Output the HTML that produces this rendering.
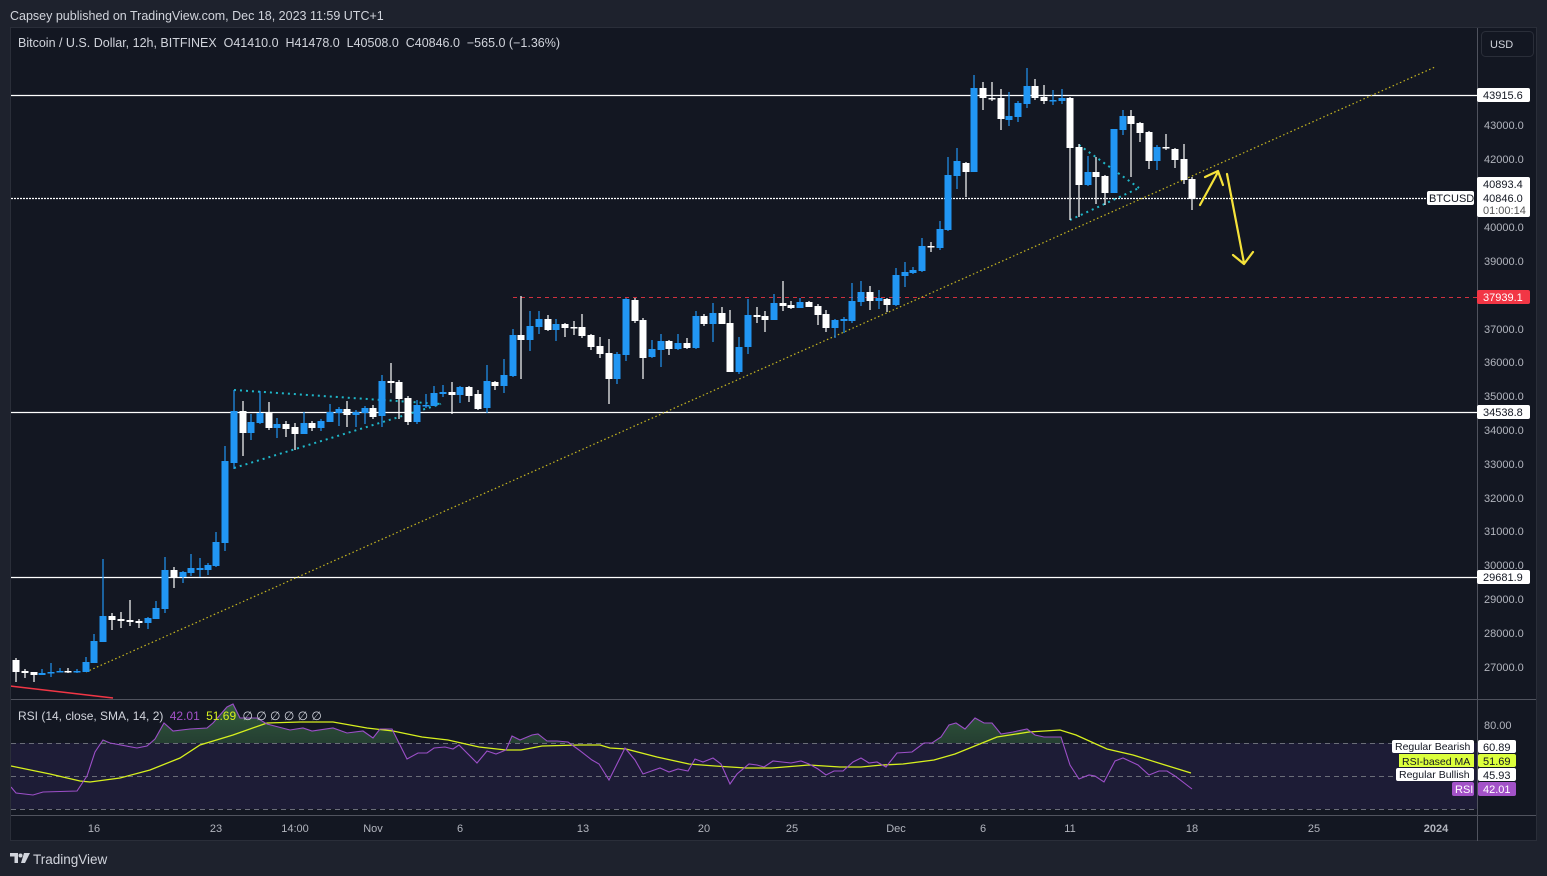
<!DOCTYPE html>
<html><head><meta charset="utf-8">
<style>
html,body{margin:0;padding:0;background:#1e222d;width:1547px;height:876px;overflow:hidden;font-family:"Liberation Sans",sans-serif}
svg{position:absolute;left:0;top:0}
</style></head><body>
<svg id="s" width="1547" height="876" xmlns="http://www.w3.org/2000/svg" font-family="Liberation Sans, sans-serif">
<defs>
<clipPath id="chartclip"><rect x="11" y="28" width="1466" height="671"/></clipPath>
<clipPath id="rsiclip"><rect x="11" y="700" width="1466" height="115"/></clipPath>
<clipPath id="above"><rect x="11" y="700" width="1466" height="43"/></clipPath>
<linearGradient id="gg" x1="0" y1="0" x2="0" y2="1"><stop offset="0" stop-color="#3f7a4a" stop-opacity="0.7"/><stop offset="1" stop-color="#2a4a35" stop-opacity="0.25"/></linearGradient>
</defs>
<text x="10" y="20" fill="#d1d4dc" font-size="12.5">Capsey published on TradingView.com, Dec 18, 2023 11:59 UTC+1</text>
<rect x="10.5" y="27.5" width="1526" height="813" fill="#131722" stroke="#2a2e39"/>
<line x1="1477.5" y1="28" x2="1477.5" y2="841" stroke="#50535e"/>
<line x1="11" y1="699.5" x2="1536" y2="699.5" stroke="#50535e"/>
<line x1="11" y1="815.5" x2="1536" y2="815.5" stroke="#50535e"/>
<rect x="11" y="743" width="1466" height="66" fill="#1f1d38" opacity="0.9"/>
<g stroke="#6a6d78" stroke-dasharray="5,4" stroke-width="1">
<line x1="11" y1="743.5" x2="1477" y2="743.5"/><line x1="11" y1="776.5" x2="1477" y2="776.5"/><line x1="11" y1="809.5" x2="1477" y2="809.5"/>
</g>
<g id="main" clip-path="url(#chartclip)">
<line x1="10" y1="686" x2="113" y2="698" stroke="#f23645" stroke-width="1.5"/>
<line x1="11" y1="95.5" x2="1477" y2="95.5" stroke="#fff" stroke-width="1.3"/>
<line x1="11" y1="412.5" x2="1477" y2="412.5" stroke="#fff" stroke-width="1.3"/>
<line x1="11" y1="577.5" x2="1477" y2="577.5" stroke="#fff" stroke-width="1.3"/>
<line x1="11" y1="198.5" x2="1427" y2="198.5" stroke="#fff" stroke-width="1.3" stroke-dasharray="2,1"/>
<line x1="513" y1="297.5" x2="1477" y2="297.5" stroke="#f23645" stroke-dasharray="4,4" opacity="0.85"/>
<line x1="86" y1="672" x2="1435" y2="67" stroke="#c8b820" stroke-width="1.2" stroke-dasharray="1.5,2.5"/>
<g stroke="#1fb6c8" stroke-width="2" stroke-dasharray="2,4" fill="none">
<line x1="234" y1="390" x2="441" y2="404"/><line x1="234" y1="468" x2="441" y2="404"/>
<line x1="1079" y1="145" x2="1139" y2="188"/><line x1="1070" y1="220" x2="1139" y2="188"/>
</g>
<g id="candles"></g>
<g stroke="#f5e23a" stroke-width="2.2" fill="none" stroke-linecap="round" stroke-linejoin="round">
<path d="M1200 205 L1218 172 M1205 177 L1218 171 L1223 185"/>
<path d="M1227 174 L1244 263 M1233 255 L1244 264 L1253 252"/>
</g>
</g>
<g clip-path="url(#rsiclip)">
<g clip-path="url(#above)"><path id="rsifill" fill="url(#gg)"/></g>
<path id="ma" fill="none" stroke="#d7f01e" stroke-width="1.3"/>
<path id="rsi" fill="none" stroke="#9c4fc8" stroke-width="1.1"/>
</g>
<text x="18" y="720" font-size="12" fill="#d1d4dc">RSI (14, close, SMA, 14, 2) <tspan fill="#a352c8" dx="3">42.01</tspan> <tspan fill="#d7f01e" dx="3">51.69</tspan> <tspan fill="#d1d4dc" dx="3">∅ ∅ ∅ ∅ ∅ ∅</tspan></text>
<text x="18" y="47" font-size="12.5" fill="#d1d4dc" xml:space="preserve">Bitcoin / U.S. Dollar, 12h, BITFINEX  O41410.0  H41478.0  L40508.0  C40846.0  −565.0 (−1.36%)</text>
<rect x="1481.5" y="31.5" width="52" height="25" rx="4" fill="#131722" stroke="#2a2e39"/>
<text x="1490" y="48" font-size="11" fill="#d1d4dc">USD</text>
<g id="axis" font-size="11" fill="#b2b5be"></g>
<g font-size="11">
<rect x="1477" y="88" width="53" height="14" rx="2" fill="#fff"/><text x="1483" y="99" fill="#131722">43915.6</text>
<rect x="1477" y="177" width="53" height="40" rx="2" fill="#fff"/>
<text x="1483" y="188" fill="#131722">40893.4</text><text x="1483" y="202" fill="#131722">40846.0</text><text x="1483" y="214" fill="#555">01:00:14</text>
<rect x="1427" y="191" width="47" height="14" rx="2" fill="#fff"/><text x="1429" y="202" fill="#131722">BTCUSD</text>
<rect x="1477" y="290" width="53" height="14" rx="2" fill="#f23645"/><text x="1483" y="301" fill="#fff">37939.1</text>
<rect x="1477" y="405" width="53" height="14" rx="2" fill="#fff"/><text x="1483" y="416" fill="#131722">34538.8</text>
<rect x="1477" y="570" width="53" height="14" rx="2" fill="#fff"/><text x="1483" y="581" fill="#131722">29681.9</text>
<text x="1484" y="729" fill="#b2b5be">80.00</text>
<rect x="1392" y="740" width="82" height="13" rx="2" fill="#fff"/><text x="1395" y="750" fill="#131722" font-size="10.5">Regular Bearish</text>
<rect x="1478" y="740" width="38" height="13" rx="2" fill="#fff"/><text x="1483" y="751" fill="#131722">60.89</text>
<rect x="1399" y="754" width="75" height="13" fill="#dcff3c"/><text x="1402" y="765" fill="#131722" font-size="10.5">RSI-based MA</text>
<rect x="1478" y="754" width="38" height="13" rx="2" fill="#dcff3c"/><text x="1483" y="765" fill="#131722">51.69</text>
<rect x="1396" y="768" width="78" height="13" rx="2" fill="#fff"/><text x="1399" y="778" fill="#131722" font-size="10.5">Regular Bullish</text>
<rect x="1478" y="768" width="38" height="13" rx="2" fill="#fff"/><text x="1483" y="779" fill="#131722">45.93</text>
<rect x="1452" y="782" width="22" height="14" rx="2" fill="#a352c8"/><text x="1455" y="793" fill="#fff">RSI</text>
<rect x="1478" y="782" width="38" height="14" rx="2" fill="#a352c8"/><text x="1483" y="793" fill="#fff">42.01</text>
</g>
<g id="time" font-size="11" fill="#b2b5be" text-anchor="middle"></g>
<g fill="#d1d4dc">
<path d="M10 853 h8 v10 h-3.5 v-6.5 h-4.5z"/><circle cx="20.5" cy="855.5" r="2"/><path d="M24 853 h6 l-5 10 h-4z"/>
</g>
<text x="33" y="864" font-size="13.5" fill="#d1d4dc">TradingView</text>
</svg>
<script>
var NS="http://www.w3.org/2000/svg";
function el(t,a,p){var e=document.createElementNS(NS,t);for(var k in a)e.setAttribute(k,a[k]);p.appendChild(e);return e;}
var C=[[16,660,672,658,682,'w'],[25,671,673,669,678,'w'],[34,672,675,672,682,'w'],[42,673,675,669,675,'b'],[51,672,673,663,677,'b'],[60,671,672,668,672,'b'],[68,671,672,668,673,'w'],[77,671,672,669,673,'b'],[86,662,672,657,672,'b'],[94,641,663,634,663,'b'],[103,616,642,559,642,'b'],[112,616,620,613,630,'w'],[121,619,621,612,628,'w'],[130,620,622,600,626,'w'],[139,621,623,619,628,'w'],[148,618,623,617,629,'b'],[156,608,619,601,619,'b'],[165,570,609,557,613,'b'],[174,570,577,567,588,'w'],[183,572,577,571,583,'b'],[191,568,573,554,576,'b'],[200,568,570,558,577,'b'],[208,565,570,563,575,'b'],[216,542,566,532,567,'b'],[225,461,543,446,551,'b'],[234,411,463,390,469,'b'],[243,411,433,401,456,'w'],[251,422,433,414,440,'b'],[260,413,423,391,424,'b'],[269,413,428,402,430,'w'],[277,424,428,418,438,'b'],[286,424,429,421,437,'w'],[295,427,434,423,450,'w'],[304,423,434,412,434,'b'],[312,423,428,421,431,'w'],[321,421,428,419,431,'b'],[330,412,422,404,422,'b'],[339,409,413,407,426,'b'],[347,409,415,401,427,'w'],[356,412,415,410,427,'b'],[365,408,413,406,424,'b'],[373,408,417,405,419,'w'],[382,381,416,375,427,'b'],[391,381,383,363,393,'w'],[399,382,399,380,419,'w'],[408,398,422,396,425,'w'],[417,405,422,400,424,'b'],[426,405,406,394,408,'b'],[434,393,406,386,406,'b'],[443,392,394,385,397,'b'],[452,392,395,382,414,'w'],[460,387,395,386,403,'b'],[469,387,396,386,402,'w'],[478,394,409,390,410,'w'],[487,381,408,365,413,'b'],[495,382,386,381,390,'w'],[504,375,386,359,393,'b'],[513,335,376,329,377,'b'],[521,335,340,296,379,'w'],[530,326,340,311,351,'b'],[539,319,327,311,334,'b'],[548,319,330,315,331,'w'],[556,324,330,319,341,'b'],[565,324,328,323,337,'w'],[574,327,328,321,335,'w'],[582,327,336,314,338,'w'],[591,335,347,334,350,'w'],[600,346,354,337,358,'w'],[609,353,379,339,404,'w'],[617,354,379,352,384,'b'],[626,299,355,298,361,'b'],[635,300,321,298,323,'w'],[643,320,358,318,379,'w'],[652,349,357,340,358,'b'],[661,341,350,334,367,'b'],[669,341,349,340,355,'w'],[678,343,349,334,350,'b'],[687,343,348,338,349,'w'],[696,316,348,311,349,'b'],[704,316,324,314,326,'w'],[713,313,324,303,342,'b'],[722,313,324,307,324,'w'],[730,323,372,310,372,'w'],[739,347,372,337,374,'b'],[748,315,347,299,354,'b'],[757,315,317,307,323,'w'],[765,316,320,311,332,'w'],[774,303,320,294,320,'b'],[783,303,306,281,311,'w'],[791,305,308,301,309,'w'],[800,302,308,298,308,'b'],[809,302,307,301,307,'w'],[818,306,315,304,325,'w'],[826,314,328,310,332,'w'],[835,320,328,319,338,'b'],[844,319,321,317,333,'b'],[852,301,321,283,323,'b'],[861,292,302,281,306,'b'],[870,292,301,286,310,'w'],[879,298,301,290,309,'b'],[887,299,305,298,312,'w'],[896,275,305,268,306,'b'],[905,272,276,262,287,'b'],[913,270,273,267,274,'b'],[922,246,271,238,272,'b'],[931,246,247,242,252,'w'],[940,229,248,221,250,'b'],[948,175,230,157,231,'b'],[957,161,176,148,189,'b'],[966,163,172,162,197,'w'],[974,88,172,75,172,'b'],[983,88,98,82,110,'w'],[992,98,99,82,101,'w'],[1001,98,119,89,130,'w'],[1009,116,120,92,126,'b'],[1018,103,117,101,122,'b'],[1027,86,104,68,108,'b'],[1035,86,98,79,100,'w'],[1044,97,101,85,104,'w'],[1053,100,101,90,105,'b'],[1062,98,101,89,104,'b'],[1070,98,148,97,220,'w'],[1079,147,185,144,217,'w'],[1088,172,185,156,186,'b'],[1096,172,177,157,204,'w'],[1105,176,193,175,205,'w'],[1114,129,193,129,193,'b'],[1123,116,130,110,135,'b'],[1131,116,124,110,177,'w'],[1140,123,133,122,142,'w'],[1149,132,161,131,169,'w'],[1157,147,161,145,170,'b'],[1166,147,148,134,150,'w'],[1175,149,160,148,168,'w'],[1184,159,180,144,184,'w'],[1192,179,199,177,210,'w']];
var g=document.getElementById('candles');
C.forEach(function(c){var col=c[5]=='b'?'#2196f3':'#ffffff';
el('line',{x1:c[0],x2:c[0],y1:c[3],y2:c[4],stroke:col,'stroke-width':1.2},g);
el('rect',{x:c[0]-3.5,y:c[1],width:7,height:Math.max(1.5,c[2]-c[1]),fill:col},g);});
var R=[[11,787],[16,793],[33,795],[43,792],[77,791],[87,776],[95,752],[103,740],[110,743],[137,748],[147,746],[155,739],[164,723],[173,731],[190,729],[207,728],[213,723],[227,707],[233,704],[240,718],[257,718],[267,724],[290,730],[303,728],[312,731],[333,728],[347,733],[363,731],[373,738],[380,729],[392,729],[407,759],[418,753],[427,753],[434,748],[445,747],[453,749],[459,745],[477,763],[487,751],[496,754],[506,750],[512,736],[520,740],[532,735],[538,734],[547,741],[557,741],[568,742],[579,750],[592,760],[599,764],[609,780],[625,748],[635,760],[643,774],[660,768],[669,772],[678,769],[688,771],[695,759],[703,762],[713,758],[721,764],[730,784],[737,774],[749,764],[757,765],[764,767],[773,761],[782,762],[791,763],[801,761],[809,764],[818,769],[826,775],[834,771],[843,771],[853,762],[861,758],[869,763],[877,762],[886,767],[897,753],[912,752],[924,743],[932,743],[941,737],[949,725],[956,723],[965,729],[975,718],[984,723],[992,723],[1001,734],[1013,732],[1027,729],[1035,735],[1044,737],[1061,737],[1070,765],[1079,779],[1089,775],[1095,776],[1104,782],[1115,761],[1123,758],[1138,765],[1149,775],[1159,771],[1167,771],[1175,776],[1192,789]];
var M=[[11,766],[50,774],[80,781],[90,782],[120,778],[150,770],[180,758],[200,745],[233,735],[267,723],[300,722],[333,722],[367,728],[393,731],[422,737],[448,740],[479,747],[506,750],[521,750],[542,746],[579,745],[600,745],[610,748],[626,749],[657,757],[689,764],[715,766],[746,768],[772,768],[809,765],[840,767],[861,767],[882,765],[903,764],[934,760],[955,754],[997,737],[1029,732],[1060,730],[1076,735],[1107,749],[1133,755],[1165,765],[1191,773]];
function pth(a){return 'M'+a.map(function(p){return p[0]+' '+p[1]}).join(' L');}
document.getElementById('rsi').setAttribute('d',pth(R));
document.getElementById('ma').setAttribute('d',pth(M));
document.getElementById('rsifill').setAttribute('d',pth(R)+' L1192 743 L11 743 Z');
var ax=document.getElementById('axis');
[[43000,125],[42000,159],[40000,227],[39000,261],[37000,329],[36000,362],[35000,396],[34000,430],[33000,464],[32000,498],[31000,531],[30000,565],[29000,599],[28000,633],[27000,667]].forEach(function(p){var t=el('text',{x:1484,y:p[1]+4},ax);t.textContent=p[0]+'.0';});
var tm=document.getElementById('time');
[['16',94],['23',216],['14:00',295],['Nov',373],['6',460],['13',583],['20',704],['25',792],['Dec',896],['6',983],['11',1070],['18',1192],['25',1314],['2024',1436]].forEach(function(p){var t=el('text',{x:p[1],y:832},tm);t.textContent=p[0];if(p[0]=='2024')t.setAttribute('font-weight','bold');});
</script>
</body></html>
